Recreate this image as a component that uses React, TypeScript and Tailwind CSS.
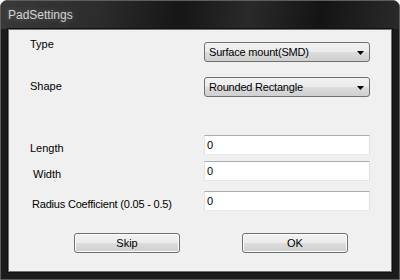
function Select({ value }: { value: string }) {
    return (
        <div className="relative flex h-[20px] w-[166px] items-center rounded-[3px] border border-[#707070] bg-[linear-gradient(#f2f2f2_0%,#ebebeb_50%,#dddddd_50%,#cfcfcf_100%)] pl-[4px]">
            <span className="tracking-[-0.2px]">{value}</span>
            {/* dropdown arrow */}
            <svg className="absolute right-[5px] top-[8px]" width="7" height="4" viewBox="0 0 7 4">
                <path d="M0 0 H7 L3.5 4 Z" fill="#000" />
            </svg>
        </div>
    );
}

function TextBox({ value }: { value: string }) {
    return (
        <div className="flex h-[20px] w-[166px] items-center border border-[#abadb3] border-b-[#e3e9ef] border-l-[#e2e3ea] border-r-[#dbdfe6] bg-white pl-[2px]">
            {value}
        </div>
    );
}

function Button({ label }: { label: string }) {
    return (
        <div className="flex h-[20px] w-[106px] items-center justify-center rounded-[3px] border border-[#707070] bg-[linear-gradient(#f2f2f2_0%,#ebebeb_50%,#dddddd_50%,#cfcfcf_100%)] shadow-[inset_0_0_0_1px_#fcfcfc]">
            {label}
        </div>
    );
}

export default function App() {
    return (
        <div className="flex h-[280px] w-[400px] flex-col rounded-t-[7px] border border-[#5e5e5e] bg-[#1c1c1c] font-['Liberation_Sans',Arial,sans-serif] text-[11px] leading-[13px] text-black">
            {/* Title bar */}
            <div className="flex h-[28px] shrink-0 items-center rounded-t-[6px] bg-[linear-gradient(100deg,#3a3a3a_0%,#2c2c2c_25%,#161616_45%,#2a2a2a_62%,#141414_80%,#2a2a2a_100%)] pl-[7px]">
                <span className="pt-[1px] text-[12px] text-[#d4d4d4] [text-shadow:0_0_6px_#6a6a6a]">PadSettings</span>
            </div>

            {/* Client area */}
            <div className="mx-[7px] flex h-[243px] shrink-0 flex-col border border-[#707070] bg-[#f0f0f0] pl-[21px] outline outline-1 outline-[#111]">
                {/* Type */}
                <div className="mt-[8px] flex">
                    <span className="w-[174px]">Type</span>
                    <div className="mt-[4px]">
                        <Select value="Surface mount(SMD)" />
                    </div>
                </div>

                {/* Shape */}
                <div className="mt-[15px] flex">
                    <span className="w-[174px] pt-[3px]">Shape</span>
                    <Select value="Rounded Rectangle" />
                </div>

                {/* Length */}
                <div className="mt-[38px] flex">
                    <span className="w-[174px] pt-[7px]">Length</span>
                    <TextBox value="0" />
                </div>

                {/* Width */}
                <div className="mt-[6px] flex">
                    <span className="w-[174px] pl-[3px] pt-[7px]">Width</span>
                    <TextBox value="0" />
                </div>

                {/* Radius */}
                <div className="mt-[10px] flex">
                    <span className="w-[174px] pl-[2px] pt-[7px] tracking-[-0.2px]">Radius Coefficient (0.05 - 0.5)</span>
                    <TextBox value="0" />
                </div>

                {/* Actions */}
                <div className="mt-[22px] flex gap-[62px] pl-[44px]">
                    <Button label="Skip" />
                    <Button label="OK" />
                </div>
            </div>
        </div>
    );
}
